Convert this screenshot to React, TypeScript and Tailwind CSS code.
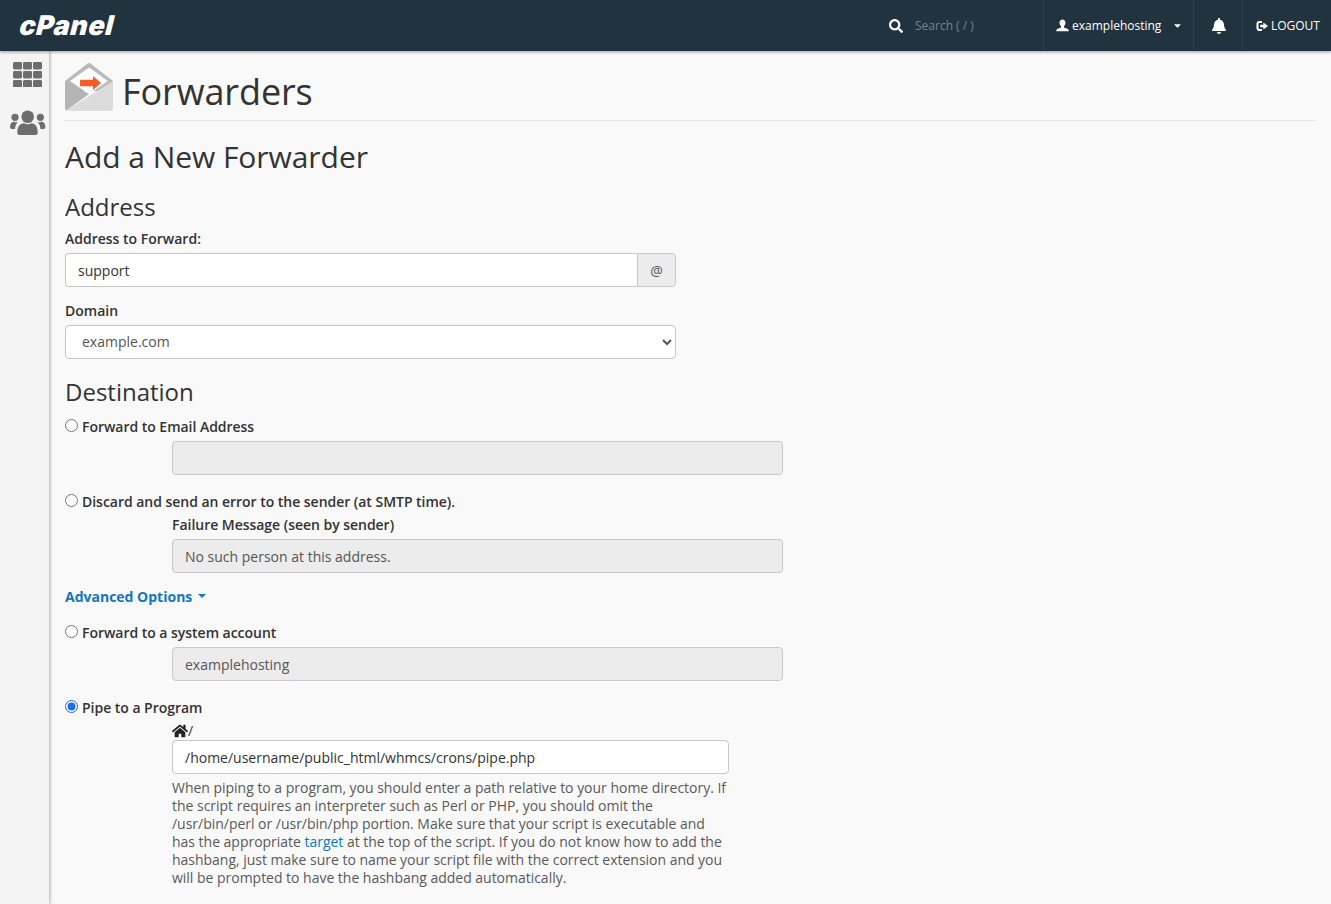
import React from "react";
import { FaBell, FaHome, FaSearch, FaCaretDown } from "react-icons/fa";

const inputCls = "block h-[34px] w-full rounded-[4px] border border-[#c7c7c7] px-3 text-[14px] text-[#333] outline-none";

function Radio({ label, checked }: { label: string; checked?: boolean }) {
  return (
    <label className="flex h-[20px] items-center text-[14px] font-semibold tracking-[-0.03px] text-[#333]">
      <input type="radio" name="fwd" defaultChecked={checked} className="mb-[2px] mr-[4px] h-[13px] w-[13px] accent-[#1a6cf0]" />
      {label}
    </label>
  );
}

function DisabledInput({ value }: { value: string }) {
  return <input disabled value={value} className={inputCls + " bg-[#ececec] text-[#555]"} />;
}

function GridIcon() {
  const cells = [0, 1, 2, 3, 4, 5, 6, 7, 8];
  return (
    <svg viewBox="0 0 29 25" className="h-[25px] w-[29px]" fill="currentColor">
      {cells.map((i) => (
        <rect key={i} x={(i % 3) * 10} y={Math.floor(i / 3) * 9} width="9" height="7.4" rx="1.4" />
      ))}
    </svg>
  );
}

function UsersIcon() {
  return (
    <svg viewBox="0 0 36 26" className="mt-[23px] h-[26px] w-[36px]" fill="currentColor">
      <circle cx="17.7" cy="6.7" r="6.3" />
      <circle cx="5" cy="7.3" r="3.6" />
      <circle cx="30.4" cy="7.3" r="3.6" />
      <path d="M7.3 22C7.3 16 11 13.3 14 13.3Q17.7 15 21.5 13.3C24.5 13.3 27.7 16 27.7 22V23a2 2 0 0 1-2 2H9.3a2 2 0 0 1-2-2z" />
      <path d="M0 17C0 13.5 2 11.7 4 11.7C5.5 12.5 7 12.5 8 12C6 14 5 16 5 19H2a2 2 0 0 1-2-2z" />
      <path d="M35.4 17C35.4 13.5 33.4 11.7 31.4 11.7C29.9 12.5 28.4 12.5 27.4 12C29.4 14 30.4 16 30.4 19H33.4a2 2 0 0 0 2-2z" />
    </svg>
  );
}

function UserGlyph() {
  return (
    <svg viewBox="0 0 14 14" className="h-[13px] w-[13px]" fill="currentColor">
      <path d="M7 0.5c2 0 3.2 1.5 3.2 3.6 0 1.6-.7 3-1.6 3.8v1.2c1.6.5 4.4 1.3 4.9 2.4.2.5.2 1.2.2 1.8H.3c0-.6 0-1.3.2-1.8.5-1.1 3.3-1.9 4.9-2.4V7.9c-.9-.8-1.6-2.2-1.6-3.8C3.8 2 5 .5 7 .5z" />
    </svg>
  );
}

function LogoutGlyph() {
  return (
    <svg viewBox="0 0 13 13" className="mr-[3px] h-[12px] w-[12px]">
      <path d="M6.5 2.2H3.6A2 2 0 0 0 1.6 4.2v4.6a2 2 0 0 0 2 2h2.9" fill="none" stroke="currentColor" strokeWidth="2.2" />
      <path d="M4.6 5.2h3.4V2.6L13 6.5 8 10.4V7.8H4.6z" fill="currentColor" />
    </svg>
  );
}

export default function App() {
  return (
    <div className="h-[904px] overflow-hidden bg-[#f9f9f9] font-['Open_Sans',sans-serif] text-[#333]">
      <header className="relative z-10 flex h-[51px] items-center bg-[#20333f] shadow-[0_1px_3px_rgba(0,0,0,0.4)]">
        <div className="ml-[20px] w-[96px] skew-x-[-14deg] font-['Inter',sans-serif] text-[27px] font-black leading-none tracking-[0.5px] text-white">cPanel</div>
        <div className="ml-auto flex h-full items-center">
          <div className="flex h-full w-[155px] items-center border-r border-[#2c404c]">
            <FaSearch className="h-[14px] w-[14px] text-white" />
            <span className="ml-[12px] text-[12px] text-[#77838b]">Search ( / )</span>
          </div>
          <div className="flex h-full w-[150px] items-center border-r border-[#2c404c] pl-[12px] text-[12px] text-white">
            <UserGlyph />
            <span className="ml-[3px]">examplehosting</span>
            <FaCaretDown className="ml-[11px] h-[11px] w-[11px]" />
          </div>
          <div className="flex h-full w-[49px] items-center justify-center border-r border-[#2c404c] pl-[2px]">
            <FaBell className="h-[16px] w-[16px] text-white" />
          </div>
          <div className="flex h-full w-[88px] items-center pl-[13px] text-[12px] tracking-[-0.05px] text-white">
            <LogoutGlyph />
            LOGOUT
          </div>
        </div>
      </header>
      <div className="flex">
        <aside className="flex h-[853px] w-[49px] shrink-0 flex-col items-center bg-[#f4f4f4] pl-[6px] pt-[11px] text-[#6d6d6d] shadow-[1px_0_3px_rgba(0,0,0,0.3)]">
          <GridIcon />
          <UsersIcon />
        </aside>
        <main className="min-w-0 flex-1 pl-[16px] pr-[15px]">
          <div className="flex h-[70px] items-start border-b border-[#e6e6e6] pt-[12px]">
            <svg viewBox="0 0 48 48" className="h-[48px] w-[48px] shrink-0">
              <path d="M0 18 22 1a3 3 0 0 1 4 0L48 18v10H0z" fill="#b9b9b9" />
              <path d="M0 18 24 31 1.2 47.4A3 3 0 0 1 0 45z" fill="#b4b4b4" />
              <path d="M48 18V45a3 3 0 0 1-3 3H3a3 3 0 0 1-1.8-.6z" fill="#dcdcdc" />
              <path d="M5 18 24 4.5 43 18 24 31z" fill="#fff" />
              <path d="M15 16.7h13V13l8 7-8 7v-3.7H15z" fill="#fb5a2a" />
            </svg>
            <h1 className="ml-[9px] text-[36px] font-normal leading-[58px] tracking-[-0.1px] text-[#333]">Forwarders</h1>
          </div>
          <h2 className="mt-[15px] text-[30px] font-normal leading-[42px] tracking-[-0.05px]">Add a New Forwarder</h2>
          <h3 className="mt-[12px] text-[24px] font-normal leading-[34px]">Address</h3>
          <div className="mt-[5px] text-[14px] font-semibold leading-[20px]">Address to Forward:</div>
          <div className="mt-[4px] flex w-[611px]">
            <input readOnly value="support" className={inputCls + " rounded-r-none border-r-0 bg-white"} />
            <span className="flex h-[34px] w-[39px] shrink-0 items-center justify-center rounded-r-[4px] border border-[#c7c7c7] bg-[#ececec] text-[14px] text-[#555]">@</span>
          </div>
          <div className="mt-[14px] text-[14px] font-semibold leading-[20px]">Domain</div>
          <select defaultValue="example.com" className="mt-[4px] block h-[34px] w-[611px] rounded-[4px] border border-[#c7c7c7] bg-white pb-[2px] pl-[12px] pr-[8px] text-[14px] text-[#555]">
            <option>example.com</option>
          </select>
          <h3 className="mt-[16px] text-[24px] font-normal leading-[34px]">Destination</h3>
          <div className="mt-[7px]"><Radio label="Forward to Email Address" /></div>
          <div className="ml-[107px] mt-[5px] w-[611px]"><DisabledInput value="" /></div>
          <div className="mt-[16px]"><Radio label="Discard and send an error to the sender (at SMTP time)." /></div>
          <div className="ml-[107px] w-[611px]">
            <div className="mt-[4px] text-[14px] font-semibold leading-[20px] tracking-[-0.03px]">Failure Message (seen by sender)</div>
            <div className="mt-[4px]"><DisabledInput value="No such person at this address." /></div>
          </div>
          <a className="mt-[13px] flex h-[20px] items-center text-[14px] font-bold text-[#1177bb]">
            Advanced Options
            <span className="ml-[6px] h-0 w-0 border-x-[4px] border-t-[4px] border-x-transparent border-t-[#1177bb]" />
          </a>
          <div className="mt-[16px]"><Radio label="Forward to a system account" /></div>
          <div className="ml-[107px] mt-[5px] w-[611px]"><DisabledInput value="examplehosting" /></div>
          <div className="mt-[16px]"><Radio label="Pipe to a Program" checked /></div>
          <div className="ml-[107px] w-[557px]">
            <div className="mt-[4px] flex h-[20px] items-center text-[14px] leading-[20px]">
              <FaHome className="h-[16px] w-[16px] text-[#222]" />/
            </div>
            <input readOnly value="/home/username/public_html/whmcs/crons/pipe.php" className={inputCls + " mt-[-1px] bg-white"} />
            <p className="mt-[5px] text-[14px] leading-[18px] tracking-[-0.02px] text-[#595959]">
              When piping to a program, you should enter a path relative to your home directory. If the script requires an interpreter such as Perl or PHP, you should omit the /usr/bin/perl or /usr/bin/php portion. Make sure that your script is executable and has the appropriate <a className="text-[#1177bb]">target</a> at the top of the script. If you do not know how to add the hashbang, just make sure to name your script file with the correct extension and you will be prompted to have the hashbang added automatically.
            </p>
          </div>
        </main>
      </div>
    </div>
  );
}
